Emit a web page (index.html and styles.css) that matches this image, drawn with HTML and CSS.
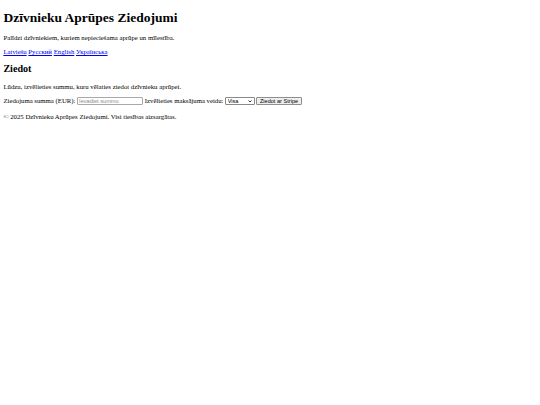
FILE: index.html
```html
<!DOCTYPE html>
<html lang="lv">
<head>
<meta charset="utf-8">
<title>Dzīvnieku Aprūpes Ziedojumi</title>
<link rel="stylesheet" href="styles.css">
</head>
<body>
<header>
<h1 class="title">Dzīvnieku Aprūpes Ziedojumi</h1>
<p class="text">Palīdzi dzīvniekiem, kuriem nepieciešama aprūpe un mīlestība.</p>
<p class="text langs"><a href="#">Latviešu</a> <a href="#">Русский</a> <a href="#">English</a> <a href="#">Українська</a></p>
</header>
<main>
<h2 class="subtitle">Ziedot</h2>
<p class="text">Lūdzu, izvēlieties summu, kuru vēlaties ziedot dzīvnieku aprūpei.</p>
<form class="text donate">
<label for="amount">Ziedojuma summa (EUR):</label> <input class="field" id="amount" type="number" placeholder="Ievadiet summu"> <label for="method">Izvēlieties maksājuma veidu:</label> <span class="select-wrap"><select class="choice" id="method"><option>Visa</option><option>Mastercard</option></select><svg class="chev" viewBox="0 0 8 5" width="4" height="2.5" aria-hidden="true"><path d="M1 1 L4 4 L7 1" fill="none" stroke="#000" stroke-width="1.6"/></svg></span> <button class="btn" type="button">Ziedot ar Stripe</button>
</form>
</main>
<footer>
<p class="text">© 2025 Dzīvnieku Aprūpes Ziedojumi. Visi tiesības aizsargātas.</p>
</footer>
</body>
</html>
```

FILE: styles.css
```css
html {
  background: #fff;
}
body {
  margin: 3.4px;
  font-family: "Liberation Serif", "Times New Roman", serif;
  font-size: 6.75px;
  color: #000;
}
.title {
  font-size: 13.5px;
  font-weight: bold;
  margin: 6.5px 0 8px;
}
.subtitle {
  font-size: 10.1px;
  font-weight: bold;
  margin: 7.5px 0 9px;
}
.text {
  margin: 7.2px 0;
}
.langs {
  margin-top: 7.4px;
}
.langs a {
  color: #0000ee;
  text-decoration: underline;
}
.donate {
  display: block;
}
.field {
  font-family: "Liberation Sans", Arial, sans-serif;
  font-size: 5.6px;
  width: 66px;
  height: 8.4px;
  box-sizing: border-box;
  padding: 0 1px;
  border: 1px solid #a8a8a8;
  border-radius: 1px;
  vertical-align: baseline;
  margin: 0;
}
.field::placeholder {
  color: #8a8a8a;
}
.select-wrap {
  position: relative;
  display: inline-block;
}
.choice {
  -webkit-appearance: none;
  appearance: none;
  font-family: "Liberation Sans", Arial, sans-serif;
  font-size: 5.6px;
  width: 29.5px;
  height: 8.2px;
  box-sizing: border-box;
  padding: 0 0 0 1.5px;
  border: 1px solid #8a8a8a;
  border-radius: 1px;
  background: #fff;
  color: #000;
  margin: 0;
}
.chev {
  position: absolute;
  right: 3px;
  top: 3px;
  pointer-events: none;
}
.btn {
  font-family: "Liberation Sans", Arial, sans-serif;
  font-size: 5.6px;
  height: 8.4px;
  box-sizing: border-box;
  padding: 0 2.5px;
  border: 1px solid #8f8f8f;
  border-radius: 1px;
  background: #efefef;
  color: #000;
  margin: 0;
}
```
